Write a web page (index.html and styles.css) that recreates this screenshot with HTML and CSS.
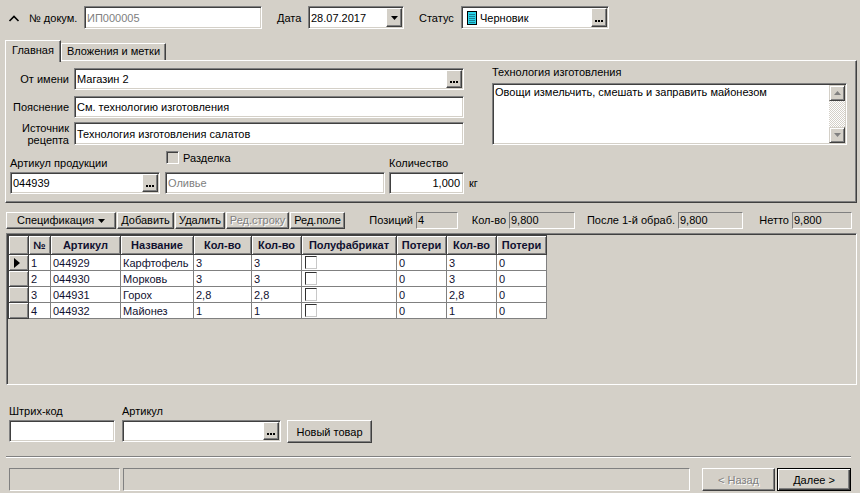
FILE: index.html
```html
<!DOCTYPE html>
<html lang="ru">
<head>
<meta charset="utf-8">
<title>Документ</title>
<link rel="stylesheet" href="styles.css">
</head>
<body>
<div class="win">
  <div class="topbar">
    <svg class="chev" width="12" height="8" viewBox="0 0 12 8"><polyline points="1.5,7 6,2.5 10.5,7" fill="none" stroke="#000" stroke-width="1.6"/></svg>
    <span class="lbl l-doc">№ докум.</span>
    <div class="edit e-doc"><span class="txt dim">ИП000005</span></div>
    <span class="lbl l-date">Дата</span>
    <div class="edit e-date"><span class="txt">28.07.2017</span><span class="ibtn"><svg width="7" height="4" viewBox="0 0 7 4"><polygon points="0,0 7,0 3.5,4" fill="#000"/></svg></span></div>
    <span class="lbl l-status">Статус</span>
    <div class="edit e-status">
      <svg class="sicon" width="10" height="14" viewBox="0 0 10 14"><rect x="0.5" y="0.5" width="9" height="13" fill="#2ad4e8" stroke="#000"/><path d="M2 3.5h6M2 5.5h6M2 7.5h6M2 9.5h6M2 11.5h6" stroke="#1b7f94" stroke-width="1"/></svg>
      <span class="txt">Черновик</span>
      <span class="ibtn dots"><svg width="8" height="2" viewBox="0 0 8 2"><rect x="0" y="0" width="2" height="2"/><rect x="3" y="0" width="2" height="2"/><rect x="6" y="0" width="2" height="2"/></svg></span>
    </div>
  </div>

  <div class="tabs">
    <div class="tab active">Главная</div>
    <div class="tab tab2">Вложения и метки</div>
  </div>

  <div class="sheet">
    <div class="leftblock">
      <div class="frow">
        <span class="rl">От имени</span>
        <div class="edit fedit"><span class="txt">Магазин 2</span><span class="ibtn dots"><svg width="8" height="2" viewBox="0 0 8 2"><rect x="0" y="0" width="2" height="2"/><rect x="3" y="0" width="2" height="2"/><rect x="6" y="0" width="2" height="2"/></svg></span></div>
      </div>
      <div class="frow r2">
        <span class="rl">Пояснение</span>
        <div class="edit fedit"><span class="txt">См. технологию изготовления</span></div>
      </div>
      <div class="frow r3">
        <span class="rl two">Источник<br>рецепта</span>
        <div class="edit fedit h23"><span class="txt">Технология изготовления салатов</span></div>
      </div>
      <div class="r4">
        <div class="g g1">
          <span class="glbl">Артикул продукции</span>
          <div class="edit gedit"><span class="txt">044939</span><span class="ibtn dots"><svg width="8" height="2" viewBox="0 0 8 2"><rect x="0" y="0" width="2" height="2"/><rect x="3" y="0" width="2" height="2"/><rect x="6" y="0" width="2" height="2"/></svg></span></div>
        </div>
        <div class="g g2">
          <label class="chk"><span class="chkbox"></span><span>Разделка</span></label>
          <div class="edit gedit"><span class="txt dim">Оливье</span></div>
        </div>
        <div class="g g3">
          <span class="glbl">Количество</span>
          <div class="edit gedit"><span class="txt num">1,000</span></div>
        </div>
        <span class="unit">кг</span>
      </div>
    </div>
    <div class="rightblock">
      <div class="mlbl">Технология изготовления</div>
      <div class="edit memo">
        <div class="mtext">Овощи измельчить, смешать и заправить майонезом</div>
        <div class="sb">
          <span class="sbb"><svg width="7" height="4" viewBox="0 0 7 4"><polygon points="0,4 7,4 3.5,0" fill="#808080"/></svg></span>
          <span class="track"></span>
          <span class="sbb"><svg width="7" height="4" viewBox="0 0 7 4"><polygon points="0,0 7,0 3.5,4" fill="#808080"/></svg></span>
        </div>
      </div>
    </div>
  </div>

  <div class="toolbar">
    <span class="tb spec"><span>Спецификация</span><svg width="7" height="4" viewBox="0 0 7 4"><polygon points="0,0 7,0 3.5,4" fill="#000"/></svg></span>
    <span class="tb w-add">Добавить</span>
    <span class="tb w-del">Удалить</span>
    <span class="tb w-row disabled">Ред.строку</span>
    <span class="tb w-fld">Ред.поле</span>
    <span class="ilbl w1">Позиций</span><span class="ifld f1">4</span>
    <span class="ilbl w2">Кол-во</span><span class="ifld f2">9,800</span>
    <span class="ilbl w3">После 1-й обраб.</span><span class="ifld f3">9,800</span>
    <span class="ilbl w4">Нетто</span><span class="ifld f4">9,800</span>
  </div>

  <div class="grid">
    <table>
      <colgroup>
        <col class="c-ind"><col class="c-n"><col class="c-art"><col class="c-name"><col class="c-q1"><col class="c-q2"><col class="c-semi"><col class="c-l1"><col class="c-q3"><col class="c-l2">
      </colgroup>
      <thead>
        <tr><th></th><th>№</th><th>Артикул</th><th>Название</th><th>Кол-во</th><th>Кол-во</th><th>Полуфабрикат</th><th>Потери</th><th>Кол-во</th><th>Потери</th></tr>
      </thead>
      <tbody>
        <tr><td class="ind"><svg width="6" height="10" viewBox="0 0 6 10"><polygon points="0,0 6,5 0,10" fill="#000"/></svg></td><td>1</td><td>044929</td><td>Карфтофель</td><td>3</td><td>3</td><td><span class="cb"></span></td><td>0</td><td>3</td><td>0</td></tr>
        <tr><td class="ind"></td><td>2</td><td>044930</td><td>Морковь</td><td>3</td><td>3</td><td><span class="cb"></span></td><td>0</td><td>3</td><td>0</td></tr>
        <tr><td class="ind"></td><td>3</td><td>044931</td><td>Горох</td><td>2,8</td><td>2,8</td><td><span class="cb"></span></td><td>0</td><td>2,8</td><td>0</td></tr>
        <tr><td class="ind"></td><td>4</td><td>044932</td><td>Майонез</td><td>1</td><td>1</td><td><span class="cb"></span></td><td>0</td><td>1</td><td>0</td></tr>
      </tbody>
    </table>
  </div>

  <div class="bottom">
    <div class="g b1">
      <span class="glbl">Штрих-код</span>
      <div class="edit gedit"></div>
    </div>
    <div class="g b2">
      <span class="glbl">Артикул</span>
      <div class="edit gedit"><span class="txt"></span><span class="ibtn dots"><svg width="8" height="2" viewBox="0 0 8 2"><rect x="0" y="0" width="2" height="2"/><rect x="3" y="0" width="2" height="2"/><rect x="6" y="0" width="2" height="2"/></svg></span></div>
    </div>
    <span class="pbtn newbtn">Новый товар</span>
  </div>

  <div class="sep"></div>

  <div class="status">
    <span class="spanel p1"></span>
    <span class="spanel p2"></span>
    <span class="pbtn back disabled">&lt; Назад</span>
    <span class="pbtn next">Далее &gt;</span>
  </div>
</div>
</body>
</html>
```

FILE: styles.css
```css
* { box-sizing: border-box; }
html, body { margin: 0; padding: 0; }
body {
  background: #d4d0c8;
  font-family: "Liberation Sans", Arial, sans-serif;
  font-size: 11px;
  color: #000;
  width: 860px;
  height: 493px;
  overflow: hidden;
}
.win { display: flex; flex-direction: column; width: 860px; height: 493px; }

/* generic sunken edit */
.edit {
  display: flex;
  align-items: center;
  height: 22px;
  background: #fff;
  border: 1px solid;
  border-color: #808080 #fff #fff #808080;
  box-shadow: inset 1px 1px 0 #404040, inset -1px -1px 0 #d4d0c8;
  padding: 1px 1px 1px 2px;
  white-space: nowrap;
  overflow: hidden;
}
.edit .txt { flex: 1; line-height: 14px; }
.dim { color: #808080; }
.num { text-align: right; padding-right: 2px; }
.ibtn {
  flex: none;
  width: 16px;
  align-self: stretch;
  display: flex;
  align-items: center;
  justify-content: center;
  background: #d4d0c8;
  border: 1px solid;
  border-color: #fff #404040 #404040 #fff;
  box-shadow: inset -1px -1px 0 #808080;
}
.ibtn.dots { align-items: flex-end; padding-bottom: 4px; }

/* top bar */
.topbar { display: flex; align-items: center; height: 23px; margin-top: 6px; }
.chev { margin-left: 8px; flex: none; }
.lbl { flex: none; }
.l-doc { margin-left: 9px; width: 55px; }
.e-doc { width: 178px; height: 23px; }
.l-date { margin-left: 15px; width: 31px; }
.e-date { width: 96px; height: 23px; }
.l-status { margin-left: 15px; width: 42px; }
.e-status { width: 148px; height: 23px; }
.sicon { margin: 0 3px 0 3px; flex: none; }

/* tabs */
.tabs {
  display: flex;
  align-items: flex-end;
  height: 20px;
  margin-top: 11px;
  padding-left: 5px;
  position: relative;
  z-index: 1;
}
.tab {
  height: 17px;
  line-height: 15px;
  text-align: center;
  background: #d4d0c8;
  border: 1px solid;
  border-bottom: none;
  border-color: #fff #404040 transparent #fff;
  box-shadow: inset -1px 0 0 #808080;
}
.tab.active { width: 56px; height: 22px; margin-bottom: -2px; line-height: 18px; }
.tab2 { width: 105px; }

/* tab sheet */
.sheet {
  display: flex;
  margin-left: 5px;
  width: 852px;
  height: 143px;
  border: 1px solid;
  border-color: #fff #404040 #404040 #fff;
  box-shadow: inset -1px -1px 0 #808080;
  padding: 7px 0 0 4px;
}
.leftblock { width: 470px; flex: none; }
.frow { display: flex; align-items: center; height: 22px; }
.r2 { margin-top: 6px; }
.r3 { margin-top: 4px; height: 23px; }
.rl { width: 59px; margin-right: 5px; text-align: right; flex: none; }
.rl.two { line-height: 12px; }
.fedit { width: 390px; }
.fedit.h23 { height: 23px; }

.r4 { display: flex; align-items: flex-end; height: 49px; }
.g { display: flex; flex-direction: column; flex: none; }
.glbl { line-height: 14px; margin-bottom: 2px; }
.g1 { width: 150px; }
.g2 { width: 220px; margin-left: 5px; height: 43px; justify-content: space-between; }
.g3 { width: 75px; margin-left: 4px; }
.gedit { width: 100%; }
.chk { display: flex; align-items: center; height: 13px; }
.chkbox {
  width: 13px;
  height: 13px;
  margin-left: 1px;
  margin-right: 4px;
  border: 1px solid;
  border-color: #808080 #fff #fff #808080;
  box-shadow: inset 1px 1px 0 #404040;
  background: #d4d0c8;
}
.unit { margin-left: 5px; line-height: 22px; }

.rightblock { width: 355px; margin-left: 12px; flex: none; }
.mlbl { line-height: 13px; margin-top: -2px; }
.memo { margin-top: 4px; height: 62px; align-items: stretch; padding: 1px; }
.mtext { flex: 1; padding: 1px 1px; line-height: 13px; white-space: normal; }
.sb { width: 16px; display: flex; flex-direction: column; flex: none; }
.sbb {
  height: 16px;
  flex: none;
  display: flex;
  align-items: center;
  justify-content: center;
  background: #d4d0c8;
  border: 1px solid;
  border-color: #d4d0c8 #404040 #404040 #d4d0c8;
  box-shadow: inset 1px 1px 0 #fff, inset -1px -1px 0 #808080;
}
.track {
  flex: 1;
  background: repeating-conic-gradient(#fff 0 25%, #d4d0c8 0 50%) 0 0 / 2px 2px;
}

/* toolbar */
.toolbar { display: flex; height: 17px; margin-top: 9px; margin-left: 6px; }
.tb {
  flex: none;
  height: 17px;
  line-height: 15px;
  text-align: center;
  background: #d4d0c8;
  border: 1px solid;
  border-color: #fff #404040 #404040 #fff;
  box-shadow: inset -1px -1px 0 #808080;
  margin-right: 1px;
}
.spec { width: 110px; display: flex; align-items: center; padding-left: 10px; }
.spec span { flex: 1; text-align: left; }
.spec svg { margin-right: 10px; }
.w-add { width: 57px; }
.w-del { width: 50px; }
.w-row { width: 63px; }
.w-fld { width: 55px; }
.disabled { color: #808080; text-shadow: 1px 1px 0 #fff; }
.ilbl { flex: none; text-align: right; padding-right: 3px; line-height: 17px; }
.w1 { width: 70px; }
.w2 { width: 51px; }
.w3 { width: 103px; }
.w4 { width: 49px; }
.ifld {
  flex: none;
  height: 17px;
  line-height: 15px;
  padding-left: 1px;
  border: 1px solid;
  border-color: #808080 #fff #fff #808080;
}
.f1 { width: 42px; }
.f2 { width: 66px; }
.f3 { width: 65px; }
.f4 { width: 60px; }

/* grid */
.grid {
  margin: 4px 0 0 6px;
  width: 851px;
  height: 152px;
  border: 1px solid;
  border-color: #808080 #fff #fff #808080;
  box-shadow: inset 1px 1px 0 #404040, inset -1px -1px 0 #d4d0c8;
  padding: 1px;
  flex: none;
}
table { border-collapse: collapse; table-layout: fixed; width: 538px; }
.c-ind { width: 20px; }
.c-n { width: 22px; }
.c-art { width: 70px; }
.c-name { width: 73px; }
.c-q1 { width: 58px; }
.c-q2 { width: 50px; }
.c-semi { width: 95px; }
.c-l1 { width: 50px; }
.c-q3 { width: 50px; }
.c-l2 { width: 50px; }
th {
  height: 19px;
  padding: 0 2px;
  background: #d4d0c8;
  font-weight: bold;
  text-align: center;
  border: 1px solid #404040;
  box-shadow: inset 1px 1px 0 #fff, inset -1px -1px 0 #808080;
  white-space: nowrap;
  overflow: hidden;
  color: #101030;
}
td {
  height: 16px;
  padding: 0 2px;
  line-height: 14px;
  background: #fff;
  border: 1px solid #808080;
  white-space: nowrap;
  overflow: hidden;
  color: #101030;
}
td.ind {
  background: #d4d0c8;
  border-color: #404040;
  box-shadow: inset 1px 1px 0 #fff, inset -1px -1px 0 #808080;
  padding: 0 0 0 5px;
}
td.ind svg { display: block; }
.cb {
  display: block;
  width: 12px;
  height: 13px;
  margin-left: 1px;
  border: 1px solid;
  border-color: #303030 #c8c8c8 #c8c8c8 #303030;
  background: #fff;
}

/* bottom */
.bottom { display: flex; align-items: flex-end; margin: 18px 0 0 9px; height: 39px; }
.b1 { width: 106px; }
.b2 { width: 159px; margin-left: 7px; }
.pbtn {
  flex: none;
  display: flex;
  align-items: center;
  justify-content: center;
  height: 23px;
  background: #d4d0c8;
  border: 1px solid;
  border-color: #fff #404040 #404040 #fff;
  box-shadow: inset -1px -1px 0 #808080;
}
.newbtn { width: 85px; margin-left: 6px; margin-bottom: -1px; }

.sep {
  margin: 14px 0 0 6px;
  width: 845px;
  height: 2px;
  border-top: 1px solid #808080;
  border-bottom: 1px solid #fff;
  flex: none;
}

.status { display: flex; height: 23px; margin-top: 10px; padding-left: 9px; }
.spanel {
  flex: none;
  height: 23px;
  border: 1px solid;
  border-color: #808080 #fff #fff #808080;
}
.p1 { width: 111px; }
.p2 { width: 567px; margin-left: 3px; }
.back { width: 73px; margin-left: 12px; }
.next {
  width: 74px;
  margin-left: 2px;
  border-color: #000;
  box-shadow: inset 1px 1px 0 #fff, inset -1px -1px 0 #404040, inset -2px -2px 0 #808080;
}
```
